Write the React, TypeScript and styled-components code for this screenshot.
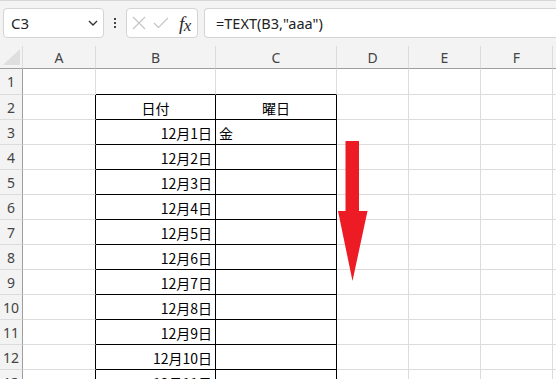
import React from "react";
import styled, { createGlobalStyle } from "styled-components";

const GlobalStyle = createGlobalStyle`
  html, body {
    margin: 0;
    padding: 0;
    width: 556px;
    height: 379px;
    overflow: hidden;
    background: #f3f3f3;
  }
`;

const JP_FONT = `"Noto Sans CJK JP", "Noto Sans", sans-serif`;
const UI_FONT = `"Noto Sans", "Liberation Sans", "Noto Sans CJK JP", sans-serif`;

const GRID = "#dcdcdc";
const HEAD_LINE = "#9e9e9e";

const colWidths = [23, 73, 120, 121, 72, 72, 72, 40];
const colNames = ["A", "B", "C", "D", "E", "F", ""];

const dates = Array.from({ length: 11 }, (_, i) => `12月${i + 1}日`);

export default function App() {
  const rows = Array.from({ length: 13 }, (_, i) => i + 1);

  return (
    <Page>
      <GlobalStyle />
      <TopStrip />
      <FormulaBar>
        <NameBox>
          <span>C3</span>
          <Chevron viewBox="0 0 10 6">
            <path d="M1 1 L5 5 L9 1" />
          </Chevron>
        </NameBox>
        <Dots>
          <i />
          <i />
          <i />
        </Dots>
        <FuncBox>
          <svg width="14" height="14" viewBox="0 0 14 14">
            <path d="M1 1 L13 13 M13 1 L1 13" stroke="#c4c4c4" strokeWidth="1.1" fill="none" />
          </svg>
          <svg width="16" height="12" viewBox="0 0 16 12">
            <path d="M1 6 L5.5 10.5 L15 1" stroke="#c4c4c4" strokeWidth="1.1" fill="none" />
          </svg>
          <Fx>
            f<span>x</span>
          </Fx>
        </FuncBox>
        <FormulaInput>=TEXT(B3,"aaa")</FormulaInput>
      </FormulaBar>
      <Sheet>
        <Grid $cols={colWidths}>
          <Corner>
            <svg width="17" height="16" viewBox="0 0 17 16">
              <path d="M17 0 L17 16 L0 16 Z" fill="#dedede" />
            </svg>
          </Corner>
          {colNames.map((c, i) => (
            <ColHead key={i}>{c}</ColHead>
          ))}
          {rows.map((r) => {
            const inTable = r >= 2;
            return (
              <React.Fragment key={r}>
                <RowHead>{r}</RowHead>
                <Cell $right={inTable ? "#000" : GRID} $bottom={GRID} />
                <Cell
                  $right={inTable ? "#000" : GRID}
                  $bottom="#000"
                  $align={r === 2 ? "center" : "right"}
                >
                  {r === 2 ? "日付" : r >= 3 ? dates[r - 3] : ""}
                </Cell>
                <Cell
                  $right={inTable ? "#000" : GRID}
                  $bottom="#000"
                  $align={r === 2 ? "center" : "left"}
                >
                  {r === 2 ? "曜日" : r === 3 ? "金" : ""}
                </Cell>
                <Cell $right={GRID} $bottom={GRID} />
                <Cell $right={GRID} $bottom={GRID} />
                <Cell $right={GRID} $bottom={GRID} />
                <Cell $right={GRID} $bottom={GRID} />
              </React.Fragment>
            );
          })}
        </Grid>
        <Arrow width="31" height="142" viewBox="0 0 31 142">
          <path d="M7.5 0 H21 V70 H29.5 L14.5 140 L0 70 H7.5 Z" fill="#ed1c24" />
        </Arrow>
      </Sheet>
    </Page>
  );
}

const Page = styled.div`
  width: 556px;
  height: 379px;
  overflow: hidden;
  display: flex;
  flex-direction: column;
  background: #f3f3f3;
`;

const TopStrip = styled.div`
  height: 2px;
  background: #ffffff;
  border-bottom: 1px solid #d6d6d6;
  border-radius: 0 0 4px 4px;
`;

const FormulaBar = styled.div`
  display: flex;
  align-items: center;
  height: 37px;
  padding: 7px 0 0 3px;
  box-sizing: border-box;
  flex: 0 0 auto;
  margin-bottom: 8px;
`;

const Box = styled.div`
  height: 30px;
  box-sizing: border-box;
  background: #ffffff;
  border: 1px solid #d4d4d4;
  border-radius: 4px;
  display: flex;
  align-items: center;
`;

const NameBox = styled(Box)`
  width: 101px;
  padding: 0 5px 0 7px;
  justify-content: space-between;
  font-family: ${UI_FONT};
  font-size: 15px;
  color: #262626;
`;

const Chevron = styled.svg`
  width: 10px;
  height: 6px;
  fill: none;
  stroke: #333;
  stroke-width: 1.4;
`;

const Dots = styled.div`
  width: 22px;
  display: flex;
  flex-direction: column;
  align-items: center;
  gap: 2px;

  i {
    width: 2px;
    height: 2px;
    background: #444;
  }
`;

const FuncBox = styled(Box)`
  width: 72px;
  padding: 0 4px 0 5px;
  gap: 7px;
`;

const Fx = styled.span`
  font-family: "Liberation Serif", "DejaVu Serif", serif;
  font-style: italic;
  font-size: 19px;
  color: #2b2b2b;
  margin-left: 3px;
  line-height: 1;
  letter-spacing: -0.5px;

  span {
    font-size: 17px;
    position: relative;
    top: 1px;
  }
`;

const FormulaInput = styled(Box)`
  flex: 1;
  margin-left: 6px;
  padding-left: 11px;
  border-right: none;
  border-radius: 4px 0 0 4px;
  font-family: ${UI_FONT};
  font-size: 14.5px;
  color: #222;
`;

const Sheet = styled.div`
  position: relative;
  flex: 1;
  background: #ffffff;
`;

const Grid = styled.div<{ $cols: number[] }>`
  display: grid;
  grid-template-columns: ${(p) => p.$cols.map((w) => `${w}px`).join(" ")};
  grid-template-rows: 23px 26px;
  grid-auto-rows: 25px;
`;

const HeadBase = styled.div`
  box-sizing: border-box;
  background: #f3f3f3;
  display: flex;
  align-items: center;
  justify-content: center;
  font-family: ${UI_FONT};
  font-size: 14px;
  color: #444;
`;

const Corner = styled(HeadBase)`
  border-bottom: 1px solid ${HEAD_LINE};
  border-right: 1px solid ${GRID};
  align-items: flex-end;
  justify-content: flex-end;
  padding: 0 2px 3px 0;
`;

const ColHead = styled(HeadBase)`
  border-bottom: 1px solid ${HEAD_LINE};
  border-right: 1px solid ${GRID};
`;

const RowHead = styled(HeadBase)`
  border-right: 1px solid ${HEAD_LINE};
  border-bottom: 1px solid ${GRID};
`;

const Cell = styled.div<{ $right: string; $bottom: string; $align?: string }>`
  box-sizing: border-box;
  background: #ffffff;
  border-right: 1px solid ${(p) => p.$right};
  border-bottom: 1px solid ${(p) => p.$bottom};
  display: flex;
  align-items: center;
  justify-content: ${(p) =>
    p.$align === "center" ? "center" : p.$align === "left" ? "flex-start" : "flex-end"};
  padding: 1px 3px 0;
  font-family: ${JP_FONT};
  font-size: 14px;
  color: #000;
  white-space: nowrap;
`;

const Arrow = styled.svg`
  position: absolute;
  left: 338px;
  top: 95px;
`;
